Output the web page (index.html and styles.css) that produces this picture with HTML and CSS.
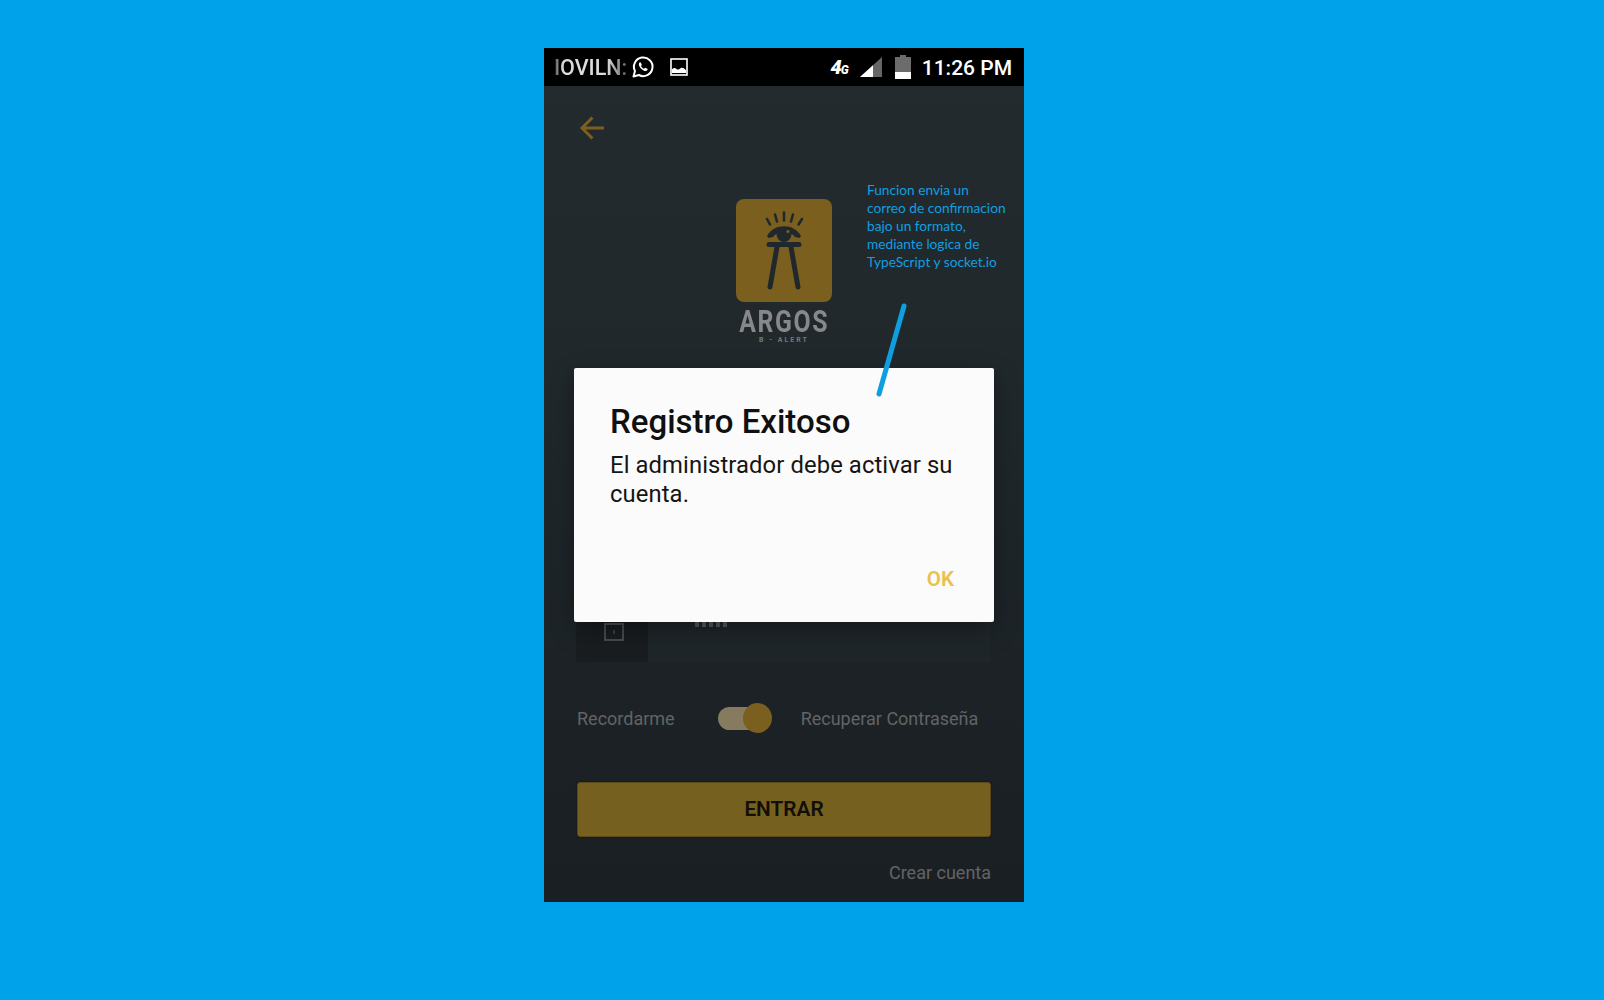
FILE: index.html
```html
<!DOCTYPE html>
<html lang="es">
<head>
<meta charset="utf-8">
<title>Argos</title>
<link rel="stylesheet" href="styles.css">
</head>
<body>
<main class="phone">
  <header class="status">
    <div class="status-left">
      <span class="carrier">IOVILN:</span>
      <svg class="ic-wa" viewBox="0 0 24 24" width="24" height="24"><path d="M2.500 21.500l1.500-5.400A9.300 9.300 0 1 1 7.900 20z" fill="none" stroke="#fff" stroke-width="2" stroke-linejoin="round"/><path d="M8.600 7.400c-.9.800-1 2.300-.2 3.900 1 2 2.500 3.500 4.600 4.400 1.400.6 2.700.3 3.400-.7.400-.6.300-1-.1-1.200l-1.800-.9c-.4-.2-.7-.1-.9.200l-.6.800c-1.300-.5-2.300-1.500-3-2.800l.6-.7c.2-.3.2-.5.100-.8l-.8-1.900c-.2-.4-.5-.6-1-.5-.2 0-.3.100-.3.200z" fill="#fff"/></svg>
      <svg class="ic-img" viewBox="0 0 18 18" width="18" height="18"><rect x="1" y="1" width="16" height="16" fill="none" stroke="#fff" stroke-width="1.600"/><path d="M2 15v-3.500c1.500-2 3-2 4.500-.5 1.500 1 2.500.5 4-.8 1.600-1 3.500-.2 5.500 2v2.800z" fill="#fff"/></svg>
    </div>
    <div class="status-right">
      <span class="net">4<small>G</small></span>
      <svg class="ic-signal" viewBox="0 0 22 20" width="22" height="20"><path d="M0 20L22 0v20z" fill="#666"/><path d="M0 20L13 8.200V20z" fill="#fff"/></svg>
      <svg class="ic-batt" viewBox="0 0 16 24" width="16" height="24"><path d="M5 0h6v2h5v22H0V2h5z" fill="#6c6c6c"/><rect y="17" width="16" height="7" fill="#fff"/></svg>
      <span class="clock">11:26 PM</span>
    </div>
  </header>

  <section class="content">
    <div class="back">
      <svg viewBox="0 0 26 26" width="26" height="26"><path d="M25 13H3M13.500 2.500L3 13l10.500 10.500" fill="none" stroke="#7c5f1f" stroke-width="3"/></svg>
    </div>

    <div class="brand">
      <div class="logo">
        <svg viewBox="0 0 96 103" width="96" height="103">
          <g fill="none" stroke="#20282c" stroke-linecap="round">
            <path stroke-width="2.600" d="M31 20l3 5.500M39 15.500l2 7M48 13.500v8M57 15.500l-2 7M66 20l-3.500 5.500"/>
            <path stroke-width="5" d="M33 45.500h30"/>
            <path stroke-width="5" d="M41 48l-7 40M55 48l7 40"/>
          </g>
          <path d="M31 37C38 24 58 24 65 37l-1.500 2-4.500-1C54 31 42 31 37 38l-4.500 1z" fill="#20282c"/>
          <circle cx="48" cy="35.500" r="7.500" fill="#20282c"/>
          <circle cx="52" cy="32.500" r="1.600" fill="#7b5f1e"/>
        </svg>
      </div>
      <div class="brand-name">ARGOS</div>
      <div class="brand-sub">B - ALERT</div>
    </div>

    <div class="field">
      <div class="field-icon">
        <svg viewBox="0 0 20 18" width="20" height="18"><rect x="1" y="1" width="18" height="16" fill="none" stroke="#55575a" stroke-width="1.600"/><rect x="9.500" y="7" width="1.200" height="4" fill="#55575a"/></svg>
      </div>
      <div class="field-input"><span class="dots"></span></div>
    </div>

    <div class="options">
      <span class="opt-text">Recordarme</span>
      <div class="toggle"><span class="knob"></span></div>
      <span class="opt-text">Recuperar Contraseña</span>
    </div>

    <button class="enter">ENTRAR</button>
    <div class="create">Crear cuenta</div>
  </section>

  <div class="dialog">
    <h1 class="dialog-title">Registro Exitoso</h1>
    <p class="dialog-msg">El administrador debe activar su cuenta.</p>
    <div class="dialog-actions"><span class="ok">OK</span></div>
  </div>

  <p class="note">Funcion envia un<br>correo de confirmacion<br>bajo un formato,<br>mediante logica de<br>TypeScript y socket.io</p>
  <svg class="pointer" viewBox="0 0 34 96" width="34" height="96"><path d="M29 3L4 91" stroke="#0d9fe0" stroke-width="5" stroke-linecap="round" fill="none"/></svg>
</main>
</body>
</html>
```
FILE: styles.css
```css
* { box-sizing: border-box; }
html, body { margin: 0; height: 100%; }
body {
  background: #00a3e9;
  padding: 48px 0 0 544px;
  overflow: hidden;
  font-family: Roboto, "Liberation Sans", sans-serif;
}
.phone {
  position: relative;
  width: 480px;
  height: 854px;
  display: flex;
  flex-direction: column;
  background: linear-gradient(#232b2f 0%, #20282c 40%, #1c2226 75%, #1a1f23 100%);
}
.status {
  height: 38px;
  background: #000;
  color: #fff;
  display: flex;
  align-items: center;
  justify-content: space-between;
  padding: 0 12px;
  flex: none;
}
.status-left, .status-right { display: flex; align-items: center; }
.carrier {
  width: 76px;
  margin: 0 1px 0 -2px;
  padding-top: 1px;
  white-space: nowrap;
  font-size: 21.500px;
  font-weight: 500;
  color: #dcdcdc;
  -webkit-mask-image: linear-gradient(90deg, #0005 0, #000 12%, #000 70%, #0005 100%);
  mask-image: linear-gradient(90deg, #0005 0, #000 12%, #000 70%, #0005 100%);
}
.ic-img { margin-left: 15px; }
.net { font-size: 20px; font-weight: 900; font-style: italic; margin-right: 12px; letter-spacing: -1px; }
.net small { font-size: 12px; font-weight: 900; }
.ic-signal { margin-right: 13px; }
.ic-batt { margin-right: 11px; }
.clock { font-size: 21px; font-weight: 500; padding-top: 2px; }

.content { flex: 1; display: flex; flex-direction: column; padding: 0 33px; }
.back { height: 84px; display: flex; align-items: center; margin-left: 2px; }
.brand { margin-top: 29px; display: flex; flex-direction: column; align-items: center; height: 258px; }
.logo { width: 96px; height: 103px; border-radius: 8px; background: #7b5f1e; }
.logo svg { display: block; }
.brand-name {
  font-size: 31px; font-weight: 700; line-height: 26px; margin-top: 7px; letter-spacing: 2px; color: #86888a;
  transform: scaleX(.8);
}
.brand-sub { font-size: 7px; font-weight: 700; line-height: 8px; margin-top: 1px; letter-spacing: 2px; color: #76787a; }

.field { margin: 114px 0 0 -1px; width: 414px; height: 91px; display: flex; background: #1f262a; flex: none; }
.field-icon { width: 72px; background: #191d20; display: flex; align-items: flex-end; justify-content: center; padding: 0 0 21px 3px; }
.field-input { flex: 1; position: relative; }
.dots {
  position: absolute; left: 47px; top: 51px; width: 33px; height: 5px;
  background: repeating-linear-gradient(90deg, #55585a 0 4px, transparent 4px 7px);
}

.options { margin-top: 39px; height: 34px; display: flex; align-items: center; flex: none; }
.opt-text { font-size: 18px; color: #626466; padding-top: 1px; }
.toggle { position: relative; width: 42px; height: 23px; margin: 0 41px 0 43px; border-radius: 12px; background: #877b5f; }
.knob { position: absolute; left: 25px; top: -4px; width: 29px; height: 30px; border-radius: 50%; background: #7b5f1e; }

.enter {
  margin: 47px 0 0;
  flex: none;
  width: 414px; height: 55px; border: 1px solid #5c4a1a;
  border-radius: 3px;
  padding: 0 0 2px;
  background: #766020;
  color: #120e08;
  box-shadow: 0 0 2px rgba(0,0,0,.6);
  font: 600 20.800px Roboto, "Liberation Sans", sans-serif;
}
.create { margin-top: 25px; text-align: right; font-size: 18px; color: #626466; }

.dialog {
  position: absolute;
  left: 30px; top: 320px;
  width: 420px; height: 254px;
  background: #fbfbfb;
  border-radius: 2px;
  padding: 35px 36px 0;
  box-shadow: 0 8px 24px rgba(0,0,0,.35);
  display: flex; flex-direction: column;
}
.dialog-title { margin: 0; font-size: 33px; line-height: 38px; font-weight: 500; color: #101010; }
.dialog-msg { margin: 10px 0 0; font-size: 23.800px; line-height: 29px; color: #151515; letter-spacing: .1px; }
.dialog-actions { margin-top: auto; text-align: right; padding: 0 4px 31px 0; }
.ok { font-size: 20.500px; font-weight: 600; color: #e8c14e; }

.note {
  position: absolute; left: 323px; top: 133px; margin: 0;
  font-family: Lato, "Open Sans", sans-serif;
  font-size: 13.700px; line-height: 18px; color: #109fe0;
}
.pointer { position: absolute; left: 331px; top: 255px; }
```
